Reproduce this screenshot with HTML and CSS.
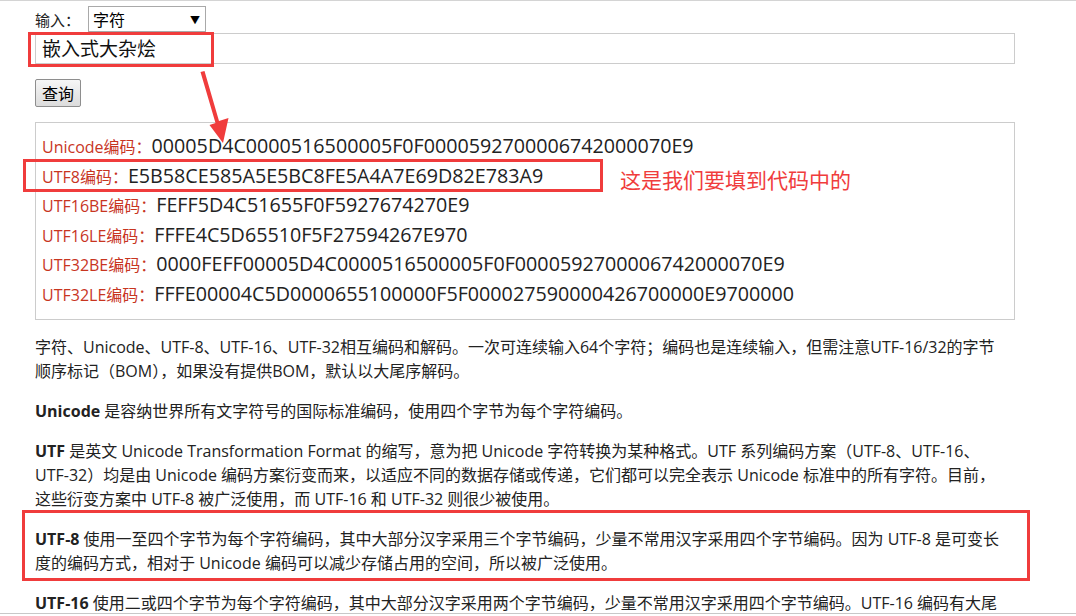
FILE: index.html
```html
<!DOCTYPE html>
<html lang="zh-CN">
<head>
  <meta charset="UTF-8">
  <meta name="viewport" content="width=device-width, initial-scale=1.0">
  <title>Unicode 编码转换</title>
  <link rel="stylesheet" href="styles.css">
</head>
<body>
  <div class="topline"></div>

  <div class="main">
    <form class="query" onsubmit="return false">
      <div class="field-row">
        <label for="input-type">输入：</label>
        <div class="select-wrap">
          <select id="input-type">
            <option>字符</option>
            <option>Unicode</option>
            <option>UTF-8</option>
            <option>UTF-16</option>
            <option>UTF-32</option>
          </select>
        </div>
      </div>
      <input class="text-input" type="text" value="嵌入式大杂烩">
      <button class="btn" type="submit">查询</button>
    </form>

    <div class="result">
      <div class="code-line"><span class="code-label">Unicode编码：</span><span class="code-value">00005D4C0000516500005F0F0000592700006742000070E9</span></div>
      <div class="code-line"><span class="code-label">UTF8编码：</span><span class="code-value">E5B58CE585A5E5BC8FE5A4A7E69D82E783A9</span></div>
      <div class="code-line"><span class="code-label">UTF16BE编码：</span><span class="code-value">FEFF5D4C51655F0F5927674270E9</span></div>
      <div class="code-line"><span class="code-label">UTF16LE编码：</span><span class="code-value">FFFE4C5D65510F5F27594267E970</span></div>
      <div class="code-line"><span class="code-label">UTF32BE编码：</span><span class="code-value">0000FEFF00005D4C0000516500005F0F0000592700006742000070E9</span></div>
      <div class="code-line"><span class="code-label">UTF32LE编码：</span><span class="code-value">FFFE00004C5D0000655100000F5F000027590000426700000E9700000</span></div>
    </div>

    <div class="desc">
      <p>字符、Unicode、UTF-8、UTF-16、UTF-32相互编码和解码。一次可连续输入64个字符；编码也是连续输入，但需注意UTF-16/32的字节顺序标记（BOM），如果没有提供BOM，默认以大尾序解码。</p>
      <p><b>Unicode</b> 是容纳世界所有文字符号的国际标准编码，使用四个字节为每个字符编码。</p>
      <p><b>UTF</b> 是英文 Unicode Transformation Format 的缩写，意为把 Unicode 字符转换为某种格式。UTF 系列编码方案（UTF-8、UTF-16、UTF-32）均是由 Unicode 编码方案衍变而来，以适应不同的数据存储或传递，它们都可以完全表示 Unicode 标准中的所有字符。目前，这些衍变方案中 UTF-8 被广泛使用，而 UTF-16 和 UTF-32 则很少被使用。</p>
      <p><b>UTF-8</b> 使用一至四个字节为每个字符编码，其中大部分汉字采用三个字节编码，少量不常用汉字采用四个字节编码。因为 UTF-8 是可变长度的编码方式，相对于 Unicode 编码可以减少存储占用的空间，所以被广泛使用。</p>
      <p><b>UTF-16</b> 使用二或四个字节为每个字符编码，其中大部分汉字采用两个字节编码，少量不常用汉字采用四个字节编码。UTF-16 编码有大尾序和小尾序之别，即 UTF-16BE 和 UTF-16LE，在编码前会放置一个 U+FEFF 或 U+FFFE（UTF-16BE 以 FEFF 代表，UTF-16LE 以 FFFE 代表），其中 U+FEFF 字符在 Unicode 中代表的意义是 ZERO WIDTH NO-BREAK SPACE，顾名思义，它是个没有宽度也没有断字的空白。</p>
    </div>
  </div>

  <!-- annotations drawn over the page -->
  <div class="mark mark-input"></div>
  <div class="mark mark-utf8"></div>
  <div class="mark mark-para"></div>
  <span class="note">这是我们要填到代码中的</span>
  <svg class="arrow" width="40" height="80" viewBox="195 68 40 80">
    <polygon points="200.5,72 204.5,71 219,121 228.5,118 223,143 209.5,125 215.5,123" fill="#f03c3c"/>
  </svg>

  <div class="bottomline"></div>
</body>
</html>
```

FILE: styles.css
```css
body {
  margin: 0;
  padding: 0;
  background-color: #fff;
  color: #222;
  font-family: "Open Sans", "Noto Sans CJK SC", sans-serif;
  position: relative;
  overflow: hidden;
}

.topline {
  height: 1px;
  background-color: #d4d4d4;
}

.main {
  width: 980px;
  padding-left: 35px;
}

/* Query form */
.query {
  display: flex;
  flex-direction: column;
  align-items: flex-start;
}

.field-row {
  display: flex;
  align-items: center;
  gap: 8px;
  margin-top: 5px;
  font-size: 15px;
}

.field-row label {
  font-family: "Noto Sans CJK SC", sans-serif;
}

.select-wrap {
  position: relative;
}

.select-wrap::after {
  content: "▼";
  position: absolute;
  right: 6px;
  top: 6px;
  font-size: 10px;
  color: #000;
  pointer-events: none;
}

.select-wrap select {
  -webkit-appearance: none;
  appearance: none;
  width: 118px;
  height: 26px;
  padding: 0 4px;
  border: 1px solid #a9a9a9;
  border-radius: 0;
  background-color: #fff;
  font-family: "Noto Sans CJK SC", sans-serif;
  font-size: 16px;
  color: #000;
}

.text-input {
  box-sizing: border-box;
  width: 980px;
  height: 31px;
  margin-top: 1px;
  padding: 0 6px 3px;
  border: 1px solid #ccc;
  font-family: "Noto Sans CJK SC", sans-serif;
  font-size: 19px;
  color: #111;
  outline: none;
}

.btn {
  box-sizing: border-box;
  height: 28px;
  margin-top: 15px;
  padding: 0 6px;
  border: 1px solid #8e8e8e;
  border-radius: 2px;
  background: linear-gradient(#f6f6f6, #dcdcdc);
  font-family: "Noto Sans CJK SC", sans-serif;
  font-size: 16px;
  color: #000;
}

/* Result box */
.result {
  box-sizing: border-box;
  height: 198px;
  margin-top: 15px;
  padding: 10px 6px;
  border: 1px solid #ccc;
}

.code-line {
  font-size: 16px;
  line-height: 29.6px;
  white-space: nowrap;
}

.code-label {
  font-size: 16px;
  line-height: 1;
  color: #c8351f;
}

.code-value {
  font-size: 19.7px;
  line-height: 1;
  color: #222;
}

/* Description */
.desc {
  width: 968px;
  margin-top: 15px;
  font-size: 16px;
  line-height: 24px;
  color: #222;
}

.desc p {
  margin: 0 0 16px;
}

.desc b {
  font-weight: bold;
}

/* Annotations */
.mark {
  position: absolute;
  border: 3px solid #f03c3c;
  box-sizing: border-box;
}

.mark-input {
  left: 28px;
  top: 32px;
  width: 186px;
  height: 35px;
}

.mark-utf8 {
  left: 23px;
  top: 159px;
  width: 580px;
  height: 33px;
}

.mark-para {
  left: 22px;
  top: 510px;
  width: 1008px;
  height: 71px;
}

.note {
  position: absolute;
  left: 620px;
  top: 165px;
  font-family: "Noto Sans CJK SC", sans-serif;
  font-size: 21px;
  line-height: 28px;
  color: #f03c3c;
}

.arrow {
  position: absolute;
  left: 195px;
  top: 68px;
}

.bottomline {
  position: fixed;
  left: 0;
  right: 0;
  bottom: 0;
  height: 2px;
  border-top: 1px solid #c8c8c8;
  background-color: #fff;
}
```
